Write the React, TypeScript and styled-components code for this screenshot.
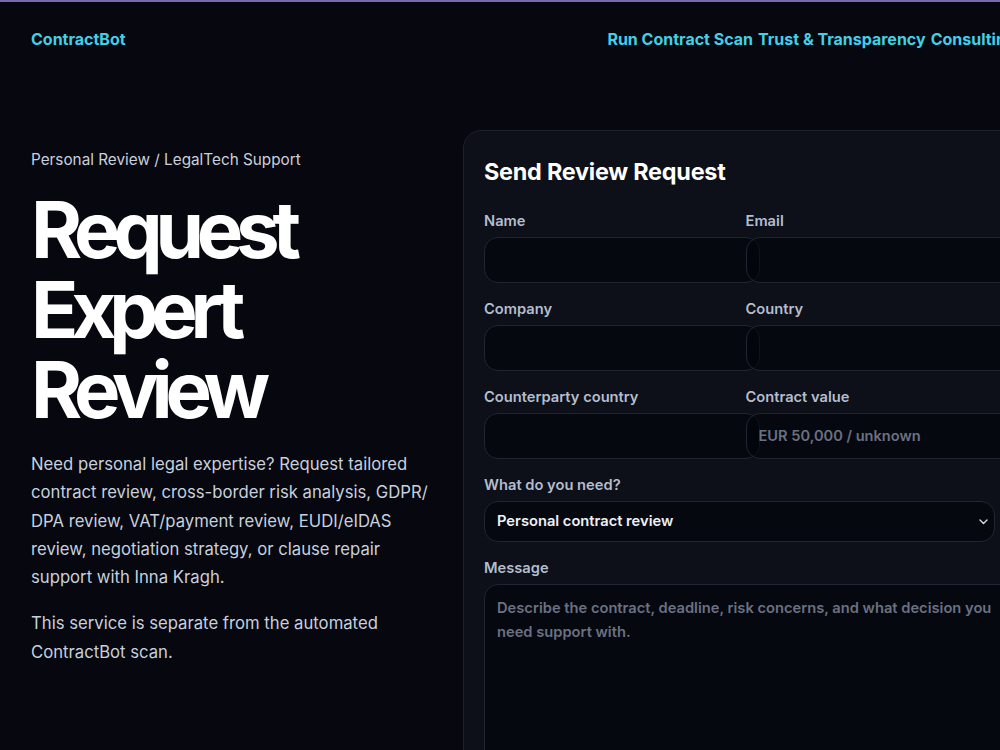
import React from "react";
import styled, { createGlobalStyle } from "styled-components";

const GlobalStyle = createGlobalStyle`
  html {
    background: #06070f;
    border-top: 2px solid #7a69ad;
  }
  body {
    margin: 0;
    overflow: hidden;
    background: #06070f;
    color: #e5e9f0;
    font-family: Inter, "Noto Sans", "Liberation Sans", sans-serif;
  }
`;

const Page = styled.div`
  width: 985px;
  padding: 0 31px;
`;

const Header = styled.header`
  display: flex;
  align-items: center;
  justify-content: space-between;
  padding: 26px 0;
  line-height: 22px;
`;

const Logo = styled.a`
  color: #43cfe6;
  font-weight: 700;
  font-size: 16px;
  text-decoration: none;
`;

const Nav = styled.nav`
  display: flex;
  gap: 5px;
  white-space: nowrap;
`;

const NavLink = styled.a`
  color: #43cfe6;
  font-weight: 700;
  font-size: 16px;
  text-decoration: none;
`;

const Main = styled.main`
  display: grid;
  grid-template-columns: minmax(0, 1fr) 553px;
  gap: 24px;
  padding-top: 54px;
  align-items: start;
`;

const Intro = styled.section`
  padding-top: 19px;
`;

const Eyebrow = styled.p`
  margin: 0;
  font-size: 15.3px;
  line-height: 22px;
  color: #c9d0dc;
`;

const Title = styled.h1`
  margin: 19px 0 20px;
  font-size: 78px;
  line-height: 80px;
  font-weight: 700;
  letter-spacing: -0.092em;
  color: #ffffff;
`;

const Lead = styled.p`
  margin: 0 0 18px;
  font-size: 16.7px;
  line-height: 28.3px;
  color: #c8d0de;
`;

const Card = styled.section`
  background: #0d0f19;
  border: 1px solid #1d2130;
  border-radius: 18px;
  padding: 26px 20px;
`;

const CardTitle = styled.h2`
  margin: 0 0 24px;
  font-size: 23.4px;
  line-height: 30px;
  font-weight: 700;
  letter-spacing: -0.01em;
  color: #ffffff;
`;

const Form = styled.form`
  display: grid;
  grid-template-columns: 1fr 1fr;
  column-gap: 12px;
  row-gap: 16px;
`;

const Field = styled.div<{ $full?: boolean }>`
  display: flex;
  flex-direction: column;
  min-width: 0;
  grid-column: ${(p) => (p.$full ? "1 / -1" : "auto")};
`;

const Label = styled.label`
  display: block;
  margin-bottom: 6px;
  font-size: 14.7px;
  line-height: 20px;
  font-weight: 600;
  color: #b3bdcd;
`;

const Input = styled.input`
  width: 100%;
  padding: 12px;
  border: 1px solid #202533;
  border-radius: 14px;
  background: rgba(2, 3, 9, 0.55);
  color: #e5e9f0;
  font: 600 14.6px/20px Inter, "Noto Sans", sans-serif;
  outline: none;
  &::placeholder {
    color: #6a7182;
  }
`;

const SelectWrap = styled.div`
  position: relative;
`;

const Select = styled.select`
  width: 100%;
  appearance: none;
  padding: 10px 12px;
  border: 1px solid #202533;
  border-radius: 14px;
  background: rgba(2, 3, 9, 0.55);
  color: #eef1f6;
  font: 600 14.7px/19px Inter, "Noto Sans", sans-serif;
  outline: none;
`;

const Chevron = styled.svg`
  position: absolute;
  right: 7px;
  top: 18px;
  pointer-events: none;
`;

const TextArea = styled.textarea`
  width: 100%;
  height: 170px;
  padding: 11px 12px 12px;
  border: 1px solid #202533;
  border-radius: 14px;
  background: rgba(2, 3, 9, 0.55);
  color: #e5e9f0;
  font: 600 14.7px/24px Inter, "Noto Sans", sans-serif;
  resize: vertical;
  outline: none;
  &::placeholder {
    color: #6a7182;
  }
`;

export default function App() {
  return (
    <>
      <GlobalStyle />
      <Page>
        <Header>
          <Logo href="#">ContractBot</Logo>
          <Nav>
            <NavLink href="#">Run Contract Scan</NavLink>
            <NavLink href="#">Trust &amp; Transparency</NavLink>
            <NavLink href="#">Consulting</NavLink>
          </Nav>
        </Header>
        <Main>
          <Intro>
            <Eyebrow>Personal Review / LegalTech Support</Eyebrow>
            <Title>
              Request
              <br />
              Expert
              <br />
              Review
            </Title>
            <Lead>
              Need personal legal expertise? Request tailored contract review,
              cross-border risk analysis, GDPR/<wbr />DPA review, VAT/payment review,
              EUDI/eIDAS review, negotiation strategy, or clause repair support
              with Inna Kragh.
            </Lead>
            <Lead>This service is separate from the automated ContractBot scan.</Lead>
          </Intro>
          <Card>
            <CardTitle>Send Review Request</CardTitle>
            <Form onSubmit={(e) => e.preventDefault()}>
              <Field>
                <Label htmlFor="name">Name</Label>
                <Input id="name" />
              </Field>
              <Field>
                <Label htmlFor="email">Email</Label>
                <Input id="email" type="email" />
              </Field>
              <Field>
                <Label htmlFor="company">Company</Label>
                <Input id="company" />
              </Field>
              <Field>
                <Label htmlFor="country">Country</Label>
                <Input id="country" />
              </Field>
              <Field>
                <Label htmlFor="cp">Counterparty country</Label>
                <Input id="cp" />
              </Field>
              <Field>
                <Label htmlFor="value">Contract value</Label>
                <Input id="value" placeholder="EUR 50,000 / unknown" />
              </Field>
              <Field $full>
                <Label htmlFor="need">What do you need?</Label>
                <SelectWrap>
                  <Select id="need" defaultValue="personal">
                    <option value="personal">Personal contract review</option>
                    <option value="risk">Cross-border risk analysis</option>
                    <option value="gdpr">GDPR/DPA review</option>
                  </Select>
                  <Chevron width="9" height="6" viewBox="0 0 9 6" fill="none">
                    <path d="M1 1l3.5 3.5L8 1" stroke="#d9dde5" strokeWidth="1.4" strokeLinecap="round" strokeLinejoin="round" />
                  </Chevron>
                </SelectWrap>
              </Field>
              <Field $full>
                <Label htmlFor="msg">Message</Label>
                <TextArea
                  id="msg"
                  placeholder="Describe the contract, deadline, risk concerns, and what decision you need support with."
                />
              </Field>
            </Form>
          </Card>
        </Main>
      </Page>
    </>
  );
}
